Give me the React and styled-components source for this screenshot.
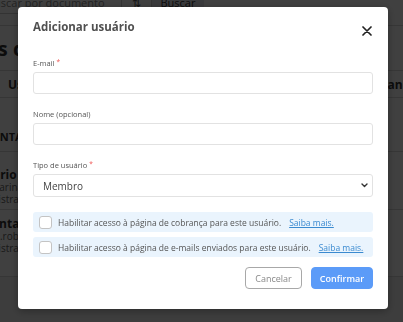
import React, { useState } from "react";
import styled, { createGlobalStyle } from "styled-components";

const Global = createGlobalStyle`
  html, body {
    margin: 0;
    padding: 0;
    width: 403px;
    height: 322px;
    overflow: hidden;
    background: #f2f2f2;
    font-family: "Open Sans", "Liberation Sans", sans-serif;
  }
`;

// page behind the modal (scrolled sideways, only slivers show)
const Page = styled.div`
  width: 560px;
  margin-left: -120px;
  background: #ffffff;
  color: #333;
  overflow: hidden;
`;

const TopBar = styled.div`
  display: flex;
  align-items: flex-start;
  height: 38px;
  margin-top: -12px;
  padding: 2px 0 0 94px;
  box-sizing: border-box;
  border-bottom: 1px solid #d8d8d8;
`;

const SearchInput = styled.div`
  width: 148px;
  height: 24px;
  border: 1px solid #ccc;
  font-size: 11px;
  color: #888;
  display: flex;
  align-items: center;
  padding-left: 12px;
  box-sizing: border-box;
  white-space: nowrap;
  overflow: hidden;
`;

const IconBtn = styled.div`
  width: 30px;
  height: 24px;
  border: 1px solid #ccc;
  border-left: 0;
  box-sizing: border-box;
  display: flex;
  align-items: center;
  justify-content: center;
  font-size: 11px;
  color: #555;
`;

const SearchBtn = styled.div`
  width: 52px;
  height: 24px;
  background: #e4e6ee;
  font-size: 11px;
  display: flex;
  align-items: center;
  justify-content: center;
`;

const Heading = styled.h2`
  margin: 0;
  font-size: 20px;
  font-weight: 700;
  height: 45px;
  display: flex;
  align-items: center;
  padding-left: 40px;
  box-sizing: border-box;
  border-bottom: 1px solid #d8d8d8;
`;

const HeadRow = styled.div`
  display: flex;
  align-items: center;
  height: 27px;
  padding-left: 128px;
  box-sizing: border-box;
  font-size: 12px;
  font-weight: 700;
  border-bottom: 1px solid #d8d8d8;
  white-space: nowrap;
`;

const HeadCell = styled.span`
  width: ${(p) => p.$w || "auto"};
`;

const Section = styled.div`
  height: 54px;
  display: flex;
  align-items: flex-end;
  padding: 0 0 7px 104px;
  box-sizing: border-box;
  font-size: 11px;
  font-weight: 700;
  border-bottom: 1px solid #d8d8d8;
`;

const UserRow = styled.div`
  height: ${(p) => p.$h}px;
  padding-top: ${(p) => p.$pt}px;
  box-sizing: border-box;
  border-bottom: 1px solid #d8d8d8;
  line-height: 12px;
`;

const Line = styled.div`
  padding-left: ${(p) => p.$indent}px;
  font-size: ${(p) => (p.$bold ? 12 : 10)}px;
  font-weight: ${(p) => (p.$bold ? 700 : 400)};
  color: ${(p) => (p.$bold ? "#333" : "#666")};
  white-space: nowrap;
`;

// modal
const Overlay = styled.div`
  position: fixed;
  inset: 0;
  background: rgba(0, 0, 0, 0.75);
  display: flex;
  align-items: flex-start;
  padding: 7px 0 0 18px;
`;

const Modal = styled.div`
  width: 370px;
  height: 302px;
  box-sizing: border-box;
  background: #fff;
  border-radius: 4px;
  padding: 12px 15px 0 15px;
  box-shadow: 0 2px 8px rgba(0, 0, 0, 0.3);
`;

const Header = styled.div`
  display: flex;
  justify-content: space-between;
  align-items: flex-start;
  height: 39px;
`;

const Title = styled.h3`
  margin: 0;
  font-size: 11.5px;
  font-weight: 700;
  color: #505050;
  line-height: 16px;
`;

const Close = styled.button`
  border: 0;
  background: none;
  padding: 0;
  margin: 7px 1px 0 0;
  width: 10px;
  height: 10px;
  cursor: pointer;
  display: flex;
`;

const Field = styled.div`
  position: relative;
  display: flex;
  flex-direction: column;
  margin-bottom: 15px;
`;

const Label = styled.label`
  font-size: 7.5px;
  color: #555;
  line-height: 10px;
  margin-bottom: 4px;
  & span {
    color: #ef5350;
    font-size: 6.5px;
    vertical-align: top;
    margin-left: 2px;
    line-height: 8px;
  }
`;

const Input = styled.input`
  height: 22px;
  box-sizing: border-box;
  border: 1px solid #e2e2e2;
  border-radius: 3px;
  font-family: inherit;
  font-size: 10px;
  padding: 0 9px;
  outline: none;
`;

const Select = styled.select`
  appearance: none;
  height: 23px;
  box-sizing: border-box;
  border: 1px solid #e2e2e2;
  border-radius: 3px;
  font-family: inherit;
  font-size: 10px;
  color: #444;
  padding: 0 9px;
  background: #fff;
  outline: none;
`;

const Chevron = styled.svg`
  position: absolute;
  right: 5px;
  bottom: 9px;
  pointer-events: none;
`;

const CheckRow = styled.label`
  display: flex;
  align-items: center;
  gap: 6px;
  height: 20px;
  background: #eaf4fd;
  border-radius: 3px;
  padding: 0 6px;
  margin-bottom: 5px;
  font-size: 8.5px;
  color: #555;
  white-space: nowrap;
`;

const Box = styled.input`
  appearance: none;
  margin: 0;
  width: 13px;
  height: 13px;
  border: 1px solid #c4c4c4;
  border-radius: 3px;
  background: #fff;
  flex-shrink: 0;
  &:checked {
    background: #5b9bf8;
    border-color: #5b9bf8;
  }
`;

const Link = styled.a`
  color: #3a8ad0;
  text-decoration: underline;
  margin-left: 2px;
`;

const Footer = styled.div`
  display: flex;
  justify-content: flex-end;
  gap: 9px;
  margin-top: 10px;
`;

const Button = styled.button`
  width: ${(p) => (p.$primary ? 62 : 57)}px;
  height: 22px;
  padding: 0;
  border-radius: 4px;
  font-family: inherit;
  font-size: 9px;
  font-weight: ${(p) => (p.$primary ? 600 : 400)};
  border: 1px solid ${(p) => (p.$primary ? "#5b9bf8" : "#a8a8a8")};
  background: ${(p) => (p.$primary ? "#5b9bf8" : "#fff")};
  color: ${(p) => (p.$primary ? "#fff" : "#888")};
  cursor: pointer;
`;

export default function App() {
  const [billing, setBilling] = useState(false);
  const [emails, setEmails] = useState(false);

  return (
    <>
      <Global />
      <Page>
        <TopBar>
          <SearchInput>Buscar por documento</SearchInput>
          <IconBtn>⇅</IconBtn>
          <SearchBtn>Buscar</SearchBtn>
        </TopBar>
        <Heading>Usuários da conta</Heading>
        <HeadRow>
          <HeadCell $w="264px">Usuário</HeadCell>
          <HeadCell>Permissões de cobrança</HeadCell>
        </HeadRow>
        <Section>CONTA PRINCIPAL</Section>
        <UserRow $h={58} $pt={17}>
          <Line $bold $indent={90}>Usuário 2</Line>
          <Line $indent={110}>marina@exemplo.com</Line>
          <Line $indent={88}>Administrador</Line>
        </UserRow>
        <UserRow $h={67} $pt={8}>
          <Line $bold $indent={104}>Conta Teste</Line>
          <Line $indent={93}>maria.roberta@exemplo.com</Line>
          <Line $indent={88}>Administrador</Line>
        </UserRow>
      </Page>

      <Overlay>
        <Modal>
          <Header>
            <Title>Adicionar usuário</Title>
            <Close aria-label="Fechar">
              <svg width="10" height="10" viewBox="0 0 10 10">
                <path d="M1 1L9 9M9 1L1 9" stroke="#222" strokeWidth="1.7" strokeLinecap="round" />
              </svg>
            </Close>
          </Header>

          <Field>
            <Label>
              E-mail<span>*</span>
            </Label>
            <Input type="email" />
          </Field>

          <Field>
            <Label>Nome (opcional)</Label>
            <Input type="text" />
          </Field>

          <Field>
            <Label>
              Tipo de usuário<span>*</span>
            </Label>
            <Select defaultValue="membro">
              <option value="membro">Membro</option>
              <option value="admin">Administrador</option>
            </Select>
            <Chevron width="7" height="5" viewBox="0 0 7 5">
              <path d="M1 1l2.5 2.5L6 1" fill="none" stroke="#333" strokeWidth="1.4" strokeLinecap="round" strokeLinejoin="round" />
            </Chevron>
          </Field>

          <CheckRow>
            <Box type="checkbox" checked={billing} onChange={(e) => setBilling(e.target.checked)} />
            Habilitar acesso à página de cobrança para este usuário.
            <Link href="#">Saiba mais.</Link>
          </CheckRow>
          <CheckRow>
            <Box type="checkbox" checked={emails} onChange={(e) => setEmails(e.target.checked)} />
            Habilitar acesso à página de e-mails enviados para este usuário.
            <Link href="#">Saiba mais.</Link>
          </CheckRow>

          <Footer>
            <Button>Cancelar</Button>
            <Button $primary>Confirmar</Button>
          </Footer>
        </Modal>
      </Overlay>
    </>
  );
}
